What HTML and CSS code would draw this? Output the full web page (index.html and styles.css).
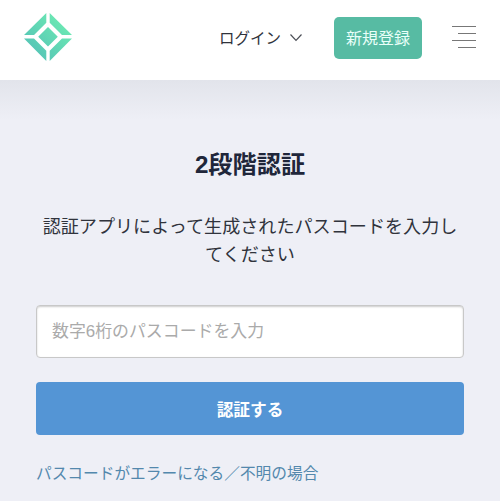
FILE: index.html
```
<!DOCTYPE html>
<html lang="ja">
<head>
  <meta charset="UTF-8">
  <title>2段階認証</title>

  <link rel="stylesheet" href="styles.css">
</head>
<body>
  <header class="header">
    <a class="logo" href="#">
      <svg width="48" height="48" viewBox="0 0 48 48">
        <defs>
          <linearGradient id="logo-color" gradientUnits="userSpaceOnUse" x1="8" y1="40" x2="40" y2="8">
            <stop offset="0" stop-color="#55c4b6"/>
            <stop offset="1" stop-color="#6ce9b3"/>
          </linearGradient>
        </defs>
        <path fill="url(#logo-color)" d="M22.300 0V9.800L10 22.100H0ZM25.700 0L48 22.100H38L25.700 9.800ZM0 25.500H10L22.300 37.800V48ZM48 25.500L25.700 48V37.800L38 25.500ZM24 14L33.800 23.800L24 33.600L14.200 23.800Z"/>
      </svg>
    </a>
    <nav class="nav">
      <a class="login" href="#">
        ログイン
        <svg class="arrow" width="14" height="9" viewBox="0 0 14 9">
          <path d="M1.500 1.500L7 7.300L12.500 1.500" fill="none" stroke="#4b4e56" stroke-width="1.200"/>
        </svg>
      </a>
      <a class="signup" href="#">新規登録</a>
      <a class="menu" href="#">
        <span></span>
        <span></span>
        <span></span>
        <span></span>
      </a>
    </nav>
  </header>

  <main class="content">
    <h1>2段階認証</h1>
    <p class="description">認証アプリによって生成されたパスコードを入力してください</p>
    <form>
      <input class="passcode" type="text" placeholder="数字6桁のパスコードを入力">
      <button class="submit" type="button">認証する</button>
    </form>
    <a class="help" href="#">パスコードがエラーになる／不明の場合</a>
  </main>
</body>
</html>
```

FILE: styles.css
```
* {
  box-sizing: border-box;
}

body {
  background-color: #eeeff6;
  color: #30333c;
  font-family: "Liberation Sans", "Noto Sans CJK JP", sans-serif;
  height: 501px;
  margin: 0;
  overflow: hidden;
}

a {
  text-decoration: none;
}

.header {
  align-items: flex-start;
  background-color: #fff;
  display: flex;
  height: 80px;
  justify-content: space-between;
  padding: 13px 24px 0;
}

.logo svg {
  display: block;
}

.nav {
  align-items: center;
  display: flex;
  height: 50px;
}

.login {
  align-items: center;
  color: #30333c;
  display: flex;
  font-size: 15.5px;
  padding-bottom: 3px;
}

.arrow {
  margin: 2px 0 0 8px;
}

.signup {
  background-color: #57bba3;
  border-radius: 5px;
  color: #e9fff9;
  font-size: 16px;
  height: 42px;
  line-height: 44px;
  margin-left: 31px;
  text-align: center;
  width: 88px;
}

.menu {
  align-items: flex-end;
  display: flex;
  flex-direction: column;
  gap: 6px;
  margin-left: 29px;
  padding-bottom: 2px;
  width: 25px;
}

.menu span {
  background-color: #777;
  height: 1px;
  width: 24px;
}

.menu span:nth-child(even) {
  width: 18px;
}

.content {
  background: linear-gradient(#e2e4eb, #eeeff6 40px);
  height: 421px;
  padding: 67px 36px 0;
}

h1 {
  color: #20263a;
  font-size: 24.2px;
  line-height: 36px;
  margin: 0 0 30px;
  text-align: center;
}

.description {
  font-size: 18.1px;
  line-height: 28px;
  margin: 0 0 36px;
  text-align: center;
}

.passcode {
  background-color: #fff;
  border: 1px solid #c8c8c8;
  border-radius: 4px;
  box-shadow: inset 0 1px 2px #ccc;
  display: block;
  font-family: inherit;
  font-size: 16.9px;
  height: 53px;
  margin-bottom: 24px;
  padding: 0 15px;
  width: 100%;
}

.passcode::placeholder {
  color: #aaa;
}

.submit {
  background-color: #5495d5;
  border: 0;
  border-radius: 4px;
  color: #fff;
  display: block;
  font-family: inherit;
  font-size: 16.7px;
  font-weight: bold;
  height: 53px;
  margin-bottom: 27px;
  padding: 0;
  width: 100%;
}

.help {
  color: #5388ad;
  display: block;
  font-size: 15.7px;
  line-height: 24px;
}
```
